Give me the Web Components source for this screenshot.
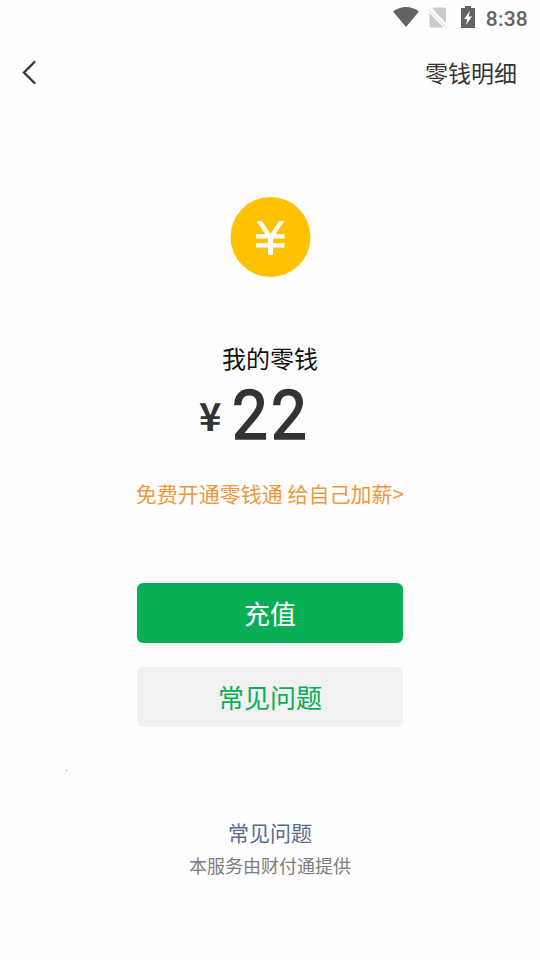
<!DOCTYPE html>
<html lang="zh-CN">
<head>
<meta charset="utf-8">
<title>零钱</title>
<style>
html,body{margin:0;height:100%;background:#fefefe}
body{font-family:"Noto Sans CJK SC",sans-serif;overflow:hidden}
</style>
</head>
<body>
<wallet-page></wallet-page>
<script>
const define = (name, html) => customElements.define(name, class extends HTMLElement {
  constructor() {
    super();
    this.attachShadow({ mode: 'open' }).innerHTML = html;
  }
});

define('status-bar', `
<style>
:host{display:flex;height:36px;align-items:center;justify-content:flex-end;padding-right:12px;box-sizing:border-box;color:#636363}
svg{display:block;flex:none;margin-bottom:2px}
.wifi{margin-right:9px}.sim{margin-right:13px}.battery{margin-right:11px}
span{font:500 21px/36px Roboto,sans-serif;letter-spacing:.2px;padding-top:2px}
</style>
<svg class="wifi" width="26" height="22" viewBox="0 0 26 22"><path d="M0 5.5C7.5-.5 18.500-.5 26 5.500L13 21Z" fill="currentColor"/></svg>
<svg class="sim" width="20" height="22" viewBox="0 0 20 22"><path d="M5.500 1.500H16.500Q18 1.500 18 3V17L4.500 3ZM1.500 7L15.500 21.500H3Q1.500 21.500 1.500 20Z" fill="#cbcbcb"/><path d="M.8 3.500L18.500 21.500" stroke="#d4d4d4" stroke-width="1"/></svg>
<svg class="battery" width="14" height="22" viewBox="0 0 14 22"><path d="M4 0H10V2H14V22H0V2H4Z" fill="currentColor"/><path d="M9 4.500L3.200 13H6.200L5 19L11 10.500H7.700Z" fill="#fff"/></svg>
<span>8:38</span>`);

define('nav-bar', `
<style>
:host{display:flex;height:72px;align-items:center;justify-content:space-between;padding:0 23px 0 22px;box-sizing:border-box;color:#333}
svg{display:block}
span{font-size:23px;line-height:34px}
</style>
<svg width="14" height="24" viewBox="0 0 14 24"><path d="M12.500 2L2 12.500L12.500 23" fill="none" stroke="#333" stroke-width="2.300" stroke-linecap="round"/></svg>
<span><slot></slot></span>`);

define('coin-icon', `
<style>:host{display:block;width:81px;height:81px}svg{display:block}</style>
<svg width="81" height="81" viewBox="0 0 81 81"><circle cx="40.500" cy="41" r="40" fill="#ffc200"/><path d="M26.500 25H32L40.500 38L49 25H54.300L45.500 38.200H54.500V42.500H43V47.200H54.500V51.500H43V59H38V51.500H26V47.200H38V42.500H26V38.200H35.300Z" fill="#fff"/></svg>`);

define('balance-amount', `
<style>
:host{display:flex;align-items:flex-start;color:#333;height:72px;width:112px}
.sign{width:24px;font-size:38px;font-weight:700;line-height:69px;margin-right:11px}
.num{font:400 69px/71px Roboto,sans-serif;-webkit-text-stroke:1.600px #333;letter-spacing:3.500px;transform:scaleX(.92);transform-origin:left}
</style>
<span class="sign">¥</span><span class="num"><slot></slot></span>`);

define('action-button', `
<style>
:host{display:flex;width:266px;height:60px;border-radius:6px;align-items:center;justify-content:center;font-size:26px;line-height:38px;background:#09af57;color:#fff}
:host([plain]){background:#f1f1f1;color:#09af57}
</style>
<span><slot></slot></span>`);

define('wallet-page', `
<style>
:host{display:flex;flex-direction:column;width:540px;height:960px}
main{display:flex;flex-direction:column;align-items:center}
coin-icon{margin-top:88px}
.label{font-size:24px;line-height:36px;margin-top:63px;color:#111}
balance-amount{margin:4px 30px 0 0}
.promo{font-size:21px;line-height:32px;margin-top:25px;color:#f0983c;white-space:pre}
.first{margin-top:74px}.second{margin-top:24px}
.speck{width:1px;height:1px;background:#777;align-self:flex-start;margin:43px 0 0 66px}
.faq{font-size:21px;line-height:32px;margin-top:45px;color:#576b95}
.provider{font-size:18px;line-height:28px;margin-top:3px;color:#7d7d7d}
</style>
<status-bar></status-bar>
<nav-bar>零钱明细</nav-bar>
<main>
<coin-icon></coin-icon>
<div class="label">我的零钱</div>
<balance-amount>22</balance-amount>
<div class="promo">免费开通零钱通 给自己加薪&gt;</div>
<action-button class="first">充值</action-button>
<action-button class="second" plain>常见问题</action-button>
<div class="speck"></div>
<div class="faq">常见问题</div>
<div class="provider">本服务由财付通提供</div>
</main>`);
</script>
</body>
</html>
